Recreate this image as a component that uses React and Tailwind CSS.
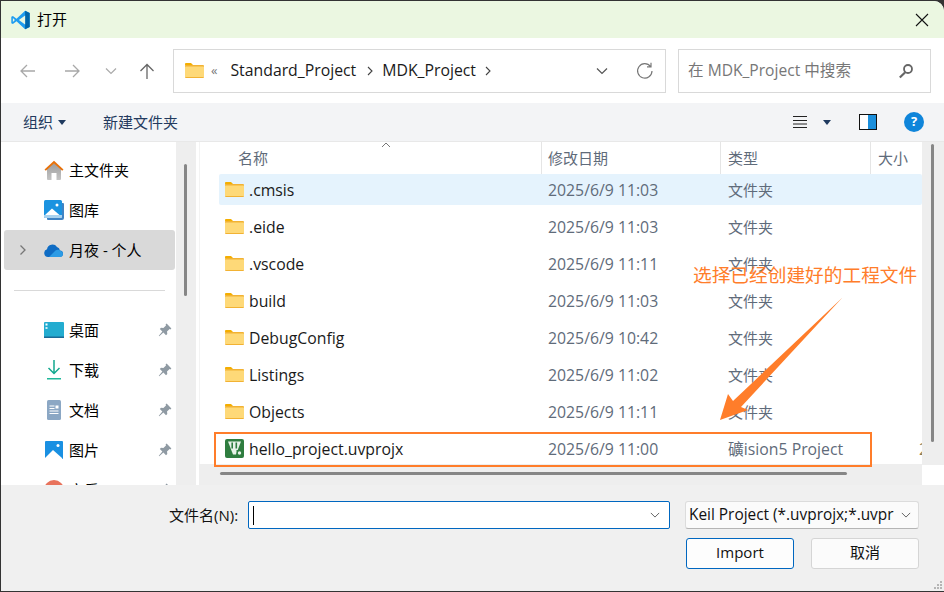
import React from 'react';

const Folder = () => (
  <svg width="19" height="15" viewBox="0 0 19 15" className="shrink-0">
    <path d="M0 1.200C0 .5.500 0 1.200 0H6L8.500 2.500H0Z" fill="#f4ae00" />
    <rect x="0" y="2" width="19" height="13" rx="1" fill="#f2b233" />
    <rect x="0" y="3.500" width="19" height="10.500" rx=".5" fill="#fed978" />
  </svg>
);

const Pin = () => (
  <svg width="14" height="14" viewBox="0 0 14 14">
    <path d="M8.600.6 13.400 5.400 12.400 6.400 11.600 6 9 8.600 9.300 11 8 12.200 5.400 9.600 1.200 13.200.8 12.800 4.400 8.600 1.800 6 3 4.700 5.400 5 8 2.400 7.600 1.600Z" fill="#8f9aa3" />
  </svg>
);

const icons = {
  home: (
    <svg width="20" height="20" viewBox="0 0 20 20">
      <defs>
        <linearGradient id="h1" x1="0" y1="0" x2="0" y2="1"><stop offset="0" stopColor="#9d9d9d" /><stop offset="1" stopColor="#c4c4c4" /></linearGradient>
      </defs>
      <path d="M3 9 10 3l7 6v10a1 1 0 0 1-1 1H12.500V13h-5v7H4a1 1 0 0 1-1-1Z" fill="url(#h1)" />
      <path d="M.5 9.500 10 .8l9.500 8.700-1.300 1.300L10 3.400 1.800 10.800Z" fill="#e8710a" />
    </svg>
  ),
  gallery: (
    <svg width="20" height="20" viewBox="0 0 20 20">
      <path d="M18 3h1a1 1 0 0 1 1 1v14a2 2 0 0 1-2 2H4a1 1 0 0 1-1-1v-1h15Z" fill="#3f83c4" />
      <rect x="0" y="0" width="18" height="18" rx="1.500" fill="#1b93e0" />
      <circle cx="13" cy="5" r="1.500" fill="#fff" />
      <path d="M1 15 8 8.500 15.500 15Z" fill="#fff" />
      <path d="M0 15h18v1.500a1.500 1.500 0 0 1-1.500 1.500h-15A1.500 1.500 0 0 1 0 16.500Z" fill="#a9d2ef" />
    </svg>
  ),
  cloud: (
    <svg width="20" height="14" viewBox="0 0 20 14">
      <path d="M4 14a4 4 0 0 1-1-7.800A5.500 5.500 0 0 1 13 4a4.500 4.500 0 0 1 3 3.500A3.300 3.300 0 0 1 16.500 14Z" fill="#0f6cc4" />
      <path d="M5 14 11.500 7.500a4.500 4.500 0 0 1 5 .3A3.300 3.300 0 0 1 17 14Z" fill="#2c9be5" />
    </svg>
  ),
  desktop: (
    <svg width="20" height="16" viewBox="0 0 20 16">
      <rect width="20" height="16" rx="1" fill="#23acd0" />
      <rect y="14.500" width="20" height="1.500" fill="#1a6a96" />
      <rect x="1.500" y="1.500" width="2" height="2" fill="#fff" />
      <rect x="1.500" y="5" width="2" height="2" fill="#cfeef6" />
    </svg>
  ),
  down: (
    <svg width="14" height="20" viewBox="0 0 14 20">
      <path d="M7 0v13M1.500 8 7 13.500 12.500 8" stroke="#13a88f" strokeWidth="1.500" fill="none" />
      <rect y="18" width="14" height="1.500" fill="#1fb89a" />
    </svg>
  ),
  doc: (
    <svg width="14" height="20" viewBox="0 0 14 20">
      <rect width="14" height="20" rx="1.500" fill="#8ba7c4" />
      <path d="M2.500 6h5M2.500 8.500h5M2.500 11h9M2.500 13.500h9" stroke="#fff" strokeWidth="1" />
      <rect x="8.500" y="5.500" width="3" height="3" fill="#fff" />
    </svg>
  ),
  picture: (
    <svg width="18" height="18" viewBox="0 0 18 18">
      <rect width="18" height="18" rx="1" fill="#1a90e2" />
      <circle cx="13" cy="4.500" r="1.500" fill="#fff" />
      <path d="M0 17 8 9l9 8v1H0Z" fill="#fff" />
    </svg>
  ),
  music: (
    <svg width="20" height="20" viewBox="0 0 20 20">
      <circle cx="10" cy="10" r="10" fill="#e8735c" />
    </svg>
  ),
};

const NavRow = ({ icon, label, pin, active }) => (
  <div className={`h-[40px] shrink-0 flex items-center text-[15px] text-black rounded-[3px] ml-[3px] mr-[1px] ${active ? 'bg-[#d9d9d9]' : ''}`}>
    <div className="w-[16px] ml-[15px] shrink-0 flex items-center">
      {active && (
        <svg width="8" height="12" viewBox="0 0 8 12"><path d="M1.500 1.500 6 6l-4.500 4.500" stroke="#777" strokeWidth="1.300" fill="none" /></svg>
      )}
    </div>
    <div className="w-[20px] ml-[9px] flex justify-center shrink-0">{icons[icon]}</div>
    <span className="ml-[5px] flex-1">{label}</span>
    {pin && <span className="mr-[3px] flex"><Pin /></span>}
  </div>
);

const files = [
  ['.cmsis', '2025/6/9 11:03'],
  ['.eide', '2025/6/9 11:03'],
  ['.vscode', '2025/6/9 11:11'],
  ['build', '2025/6/9 11:03'],
  ['DebugConfig', '2025/6/9 10:42'],
  ['Listings', '2025/6/9 11:02'],
  ['Objects', '2025/6/9 11:11'],
];

const Row = ({ icon, name, date, type, sel, size, latinType }) => (
  <div className={`h-[31px] shrink-0 flex items-center rounded-[2px] text-[15.800px] ${sel ? 'bg-[#e5f3fd]' : ''}`}>
    <div className="w-[30px] pl-[6px] flex shrink-0">{icon}</div>
    <div className="w-[299px] pt-[2px] shrink-0 text-[#1a1a1a]">{name}</div>
    <div className="w-[180px] pt-[2px] shrink-0 text-[#5f6b7a]">{date}</div>
    <div className={`w-[150px] pt-[2px] shrink-0 text-[#5f6b7a] whitespace-nowrap ${latinType ? '' : 'text-[15px]'}`}>{type}</div>
    {size && <div className="w-[80px] pt-[2px] pl-[41px] shrink-0 text-[#8a7a50]">{size}</div>}
  </div>
);

const Keil = () => (
  <svg width="19" height="19" viewBox="0 0 19 19">
    <rect width="19" height="19" rx="2" fill="#2f7d3f" />
    <path d="M3 2.500h13l-5 13H8Z" fill="#e7f2e8" />
    <path d="M7.200 3.500v6M11.300 3.500v6" stroke="#2f7d3f" strokeWidth="1.600" />
    <path d="M11.500 11h6v6.500h-6Z" fill="#2f7d3f" />
    <circle cx="14.500" cy="14" r="1.700" fill="#e7f2e8" />
  </svg>
);

const Chevron = ({ c = '#555', w = 12 }) => (
  <svg width={w} height="8" viewBox="0 0 12 8"><path d="M1 1.500 6 6.500 11 1.500" stroke={c} strokeWidth="1.200" fill="none" /></svg>
);

export default function App() {
  return (
    <div className="w-[944px] h-[592px] bg-[#333333] pl-[1px] pt-[1px] pb-[1px] overflow-hidden" style={{ fontFamily: '"Open Sans","Noto Sans CJK SC",sans-serif' }}>
      <div className="relative w-full h-full flex flex-col bg-white rounded-tr-[10px] overflow-hidden">
        {/* Title bar */}
        <div className="h-[37px] shrink-0 bg-[#ebf7e1] flex items-center pl-[9px] pr-[15px]">
          <svg width="21" height="20" viewBox="0 0 100 100" className="shrink-0">
            <path d="M73 4 96 15v70L73 96 30 56 12 70 4 66V34l8-4 18 14Z" fill="#1f9cf0" />
            <path d="M73 4 96 15v70L73 96Z" fill="#0065a9" />
            <path d="M73 28 42 50l31 22Z" fill="#ebf7e1" />
            <path d="M12 40 22 50 12 60Z" fill="#ebf7e1" />
          </svg>
          <span className="ml-[6px] text-[15px] text-black flex-1">打开</span>
          <svg width="14" height="14" viewBox="0 0 14 14"><path d="M1 1 13 13M13 1 1 13" stroke="#111" strokeWidth="1.100" /></svg>
        </div>

        {/* Address row */}
        <div className="h-[65px] shrink-0 flex items-center pl-[19px] pr-[10px]">
          <svg width="16" height="14" viewBox="0 0 16 14"><path d="M15 7H1.500M7 1 1 7l6 6" stroke="#a8a8a8" strokeWidth="1.300" fill="none" /></svg>
          <svg width="16" height="14" viewBox="0 0 16 14" className="ml-[28px]"><path d="M1 7h13.500M9 1l6 6-6 6" stroke="#a8a8a8" strokeWidth="1.300" fill="none" /></svg>
          <span className="ml-[25px] flex"><Chevron c="#aaa" /></span>
          <svg width="16" height="16" viewBox="0 0 16 16" className="ml-[22px]"><path d="M8 16V1.500M1.500 8 8 1.500 14.500 8" stroke="#666" strokeWidth="1.300" fill="none" /></svg>
          <div className="ml-[18px] w-[493px] h-[44px] border border-[#d9d9d9] flex items-center pl-[11px] pr-[11px] text-[15.800px] text-[#1a1a1a] whitespace-nowrap">
            <Folder />
            <span className="ml-[7px] text-[#777] text-[13px]">«</span>
            <span className="ml-[13px]">Standard_Project</span>
            <svg width="7" height="10" viewBox="0 0 7 10" className="ml-[11px]"><path d="M1 1l4 4-4 4" stroke="#444" strokeWidth="1.100" fill="none" /></svg>
            <span className="ml-[8px]">MDK_Project</span>
            <svg width="7" height="10" viewBox="0 0 7 10" className="ml-[9px]"><path d="M1 1l4 4-4 4" stroke="#444" strokeWidth="1.100" fill="none" /></svg>
            <span className="ml-auto flex"><Chevron c="#555" w={14} /></span>
            <svg width="18" height="18" viewBox="0 0 18 18" className="ml-[27px]"><path d="M14.500 4.500A7.200 7.200 0 1 0 16 9M15 .8v4h-4" stroke="#777" strokeWidth="1.200" fill="none" /></svg>
          </div>
          <div className="ml-[12px] w-[253px] h-[44px] border border-[#d9d9d9] flex items-center pl-[9px] pr-[16px] text-[15.600px] text-[#777] whitespace-nowrap">
            <span className="flex-1">在 MDK_Project 中搜索</span>
            <svg width="16" height="16" viewBox="0 0 16 16"><circle cx="10" cy="6" r="4" stroke="#666" strokeWidth="1.800" fill="none" /><path d="M7 9.500 1.800 14.500" stroke="#666" strokeWidth="2.200" /></svg>
          </div>
        </div>

        {/* Toolbar */}
        <div className="h-[38px] shrink-0 bg-[#f3f4f6] flex items-center pl-[22px] text-[15px] text-[#233a5e]">
          <span>组织</span>
          <svg width="8" height="5" viewBox="0 0 8 5" className="ml-[5px]"><path d="M0 0h8L4 5Z" fill="#1f3a5f" /></svg>
          <span className="ml-[37px]">新建文件夹</span>
          <div className="ml-auto flex items-center">
            <svg width="14" height="12" viewBox="0 0 14 12"><path d="M0 .5h14M0 4.500h14M0 8h14M0 11.500h14" stroke="#222" strokeWidth="1" /></svg>
            <svg width="8" height="5" viewBox="0 0 8 5" className="ml-[16px]"><path d="M0 0h8L4 5Z" fill="#1f3a5f" /></svg>
            <div className="ml-[28px] w-[18px] h-[16px] border-[1.500px] border-[#111] flex">
              <div className="w-1/2 bg-white" />
              <div className="w-1/2 bg-[#1b8fdc]" />
            </div>
            <div className="ml-[27px] mr-[20px] w-[20px] h-[20px] rounded-full bg-[#0f85da] text-white text-[13px] font-bold flex items-center justify-center">?</div>
          </div>
        </div>

        {/* Main */}
        <div className="h-[344px] shrink-0 flex border-t border-[#e8e8e8] overflow-hidden">
          {/* Sidebar */}
          <div className="w-[175px] shrink-0 flex flex-col pt-[8px] overflow-hidden">
            <NavRow icon="home" label="主文件夹" />
            <NavRow icon="gallery" label="图库" />
            <NavRow icon="cloud" label="月夜 - 个人" active />
            <div className="h-[40px] shrink-0 flex items-center pl-[13px] pr-[11px]"><div className="h-px w-full bg-[#d9d9d9]" /></div>
            <NavRow icon="desktop" label="桌面" pin />
            <NavRow icon="down" label="下载" pin />
            <NavRow icon="doc" label="文档" pin />
            <NavRow icon="picture" label="图片" pin />
            <NavRow icon="music" label="音乐" pin />
          </div>
          {/* Sidebar scrollbar */}
          <div className="w-[20px] shrink-0 bg-[#eeeeee] pl-[8px] pt-[22px]">
            <div className="w-[3px] h-[132px] rounded-full bg-[#868686]" />
          </div>
          {/* Files */}
          <div className="flex-1 min-w-0 flex flex-col border-l-[3px] border-white">
            <div className="flex-1 min-h-0 flex">
              <div className="flex-1 min-w-0 flex flex-col pl-[19px] border-l border-[#f3f3f3] overflow-hidden">
                <div className="relative h-[32px] shrink-0 flex text-[15px] text-[#5f6b7a] -ml-[19px]">
                  <div className="w-[342px] pl-[38px] pt-[5px] border-r border-[#e5e5e5]">名称</div>
                  <div className="w-[179px] pl-[6px] pt-[5px] border-r border-[#e5e5e5]">修改日期</div>
                  <div className="w-[150px] pl-[7px] pt-[5px] border-r border-[#e5e5e5]">类型</div>
                  <div className="w-[50px] pl-[7px] pt-[5px]">大小</div>
                  <svg width="10" height="6" viewBox="0 0 10 6" className="absolute left-[181px] top-[0px]"><path d="M1 5 5 1l4 4" stroke="#777" strokeWidth="1" fill="none" /></svg>
                </div>
                <div className="flex flex-col gap-[6px] min-w-0">
                  {files.map((f, i) => (
                    <Row key={f[0]} icon={<Folder />} name={f[0]} date={f[1]} type="文件夹" sel={i === 0} />
                  ))}
                  <Row icon={<Keil />} name="hello_project.uvprojx" date="2025/6/9 11:00" type="礦ision5 Project" size="2" latinType />
                </div>
              </div>
              <div className="w-[22px] shrink-0 bg-[#eeeeee] pl-[9px] pt-[2px]">
                <div className="w-[3px] h-[298px] rounded-full bg-[#868686]" />
              </div>
            </div>
            <div className="h-[20px] shrink-0 flex">
              <div className="flex-1 bg-[#eeeeee] pl-[21px] pt-[8px] -mt-px">
                <div className="w-[627px] h-[3px] rounded-full bg-[#868686]" />
              </div>
              <div className="w-[22px] bg-white" />
            </div>
          </div>
        </div>

        {/* Bottom */}
        <div className="relative flex-1 bg-[#f0f0f0] pt-[16px] text-[15px] text-[#111]">
          <div className="flex items-center">
            <span className="ml-[168px] w-[79px] whitespace-nowrap">文件名(N):</span>
            <div className="w-[422px] h-[28px] bg-white border border-[#0067c0] rounded-[2px] flex items-center pl-[4px] pr-[9px]">
              <div className="w-px h-[19px] bg-black" />
              <span className="ml-auto flex"><Chevron c="#666" w={10} /></span>
            </div>
            <div className="ml-[15px] w-[234px] h-[28px] bg-[#fbfbfb] border border-[#dcdcdc] border-b-[#b5b5b5] rounded-[3px] flex items-center pl-[3px] pr-[7px] text-[15.400px]">
              <span className="overflow-hidden whitespace-nowrap w-[206px]">Keil Project (*.uvprojx;*.uvpr</span>
              <span className="ml-auto flex"><Chevron c="#666" w={10} /></span>
            </div>
          </div>
          <div className="flex mt-[9px] ml-[685px] text-[15px]">
            <div className="w-[108px] h-[31px] bg-[#fdfdfd] border border-[#0067c0] rounded-[3px] flex items-center justify-center pb-[2px]">Import</div>
            <div className="ml-[17px] w-[108px] h-[31px] bg-[#fbfbfb] border border-[#d5d5d5] rounded-[3px] flex items-center justify-center pb-[2px]">取消</div>
          </div>
          <svg width="10" height="10" viewBox="0 0 10 10" className="absolute right-[1px] bottom-[1px]">
            <path d="M7 1h2v2H7ZM4 4h2v2H4ZM7 4h2v2H7ZM1 7h2v2H1ZM4 7h2v2H4ZM7 7h2v2H7Z" fill="#b5b5b5" />
          </svg>
        </div>

        {/* Annotation overlay */}
        <div className="absolute left-[213px] top-[431px] w-[658px] h-[35px] border-[2px] border-[#ff7d2a]" />
        <div className="absolute left-[692px] top-[261px] text-[18.700px] leading-[26px] text-[#ff7d2a] whitespace-nowrap">选择已经创建好的工程文件</div>
        <svg width="130" height="130" viewBox="0 0 130 130" className="absolute left-[715px] top-[294px]">
          <path d="M126.500 2.500 17 106 12 99 4 125 32 115 25 112Z" fill="#ff7d2a" />
        </svg>
      </div>
    </div>
  );
}
